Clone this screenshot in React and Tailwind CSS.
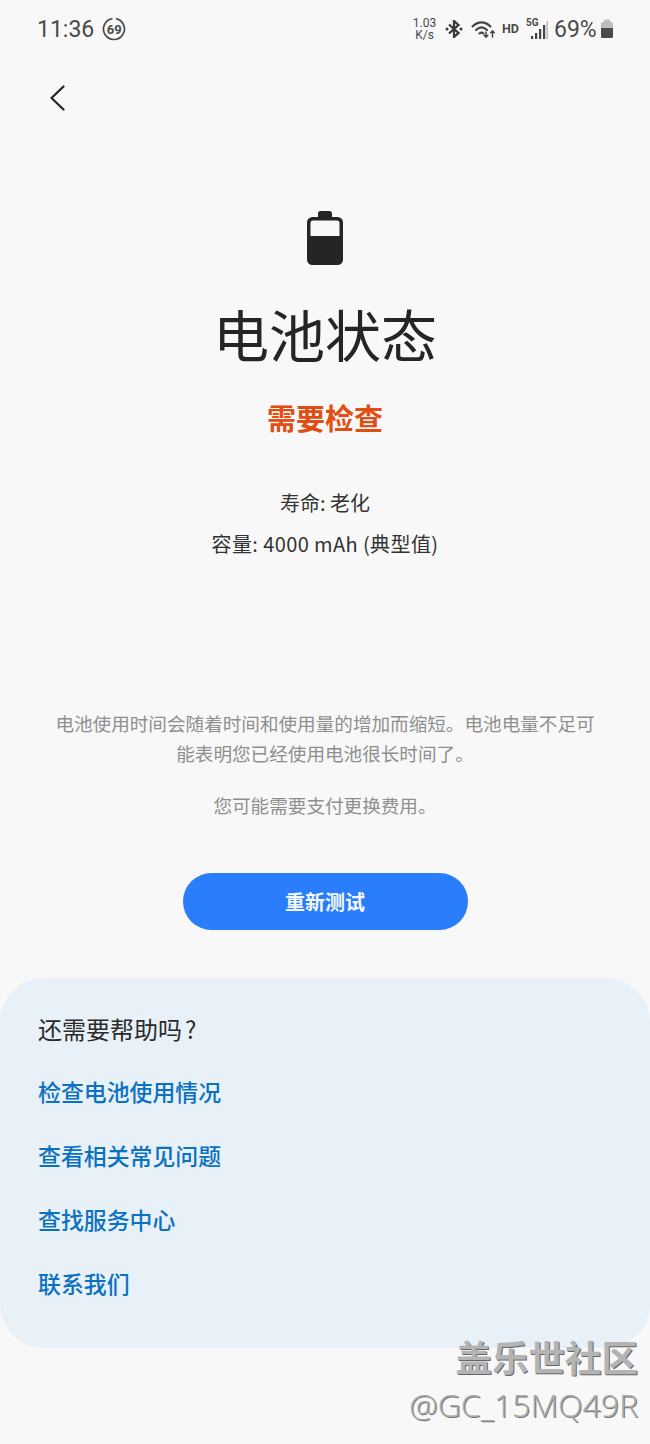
const cjk = { fontFamily: '"Noto Sans CJK SC", "Noto Sans", sans-serif' };

function StatusBar() {
  return (
    <div className="flex h-[58px] items-center justify-between pl-[37px] pr-[36px] text-[#4a4a4a]" style={{ fontFamily: 'Roboto, sans-serif' }}>
      <div className="flex items-center gap-[8px]">
        <span className="text-[23px] leading-none">11:36</span>
        <div className="relative flex h-[24px] w-[24px] items-center justify-center">
          <svg viewBox="0 0 24 24" className="absolute inset-0 h-[24px] w-[24px]" fill="none">
            <path d="M10.500 1.600A10.500 10.500 0 1 0 14 1.700" stroke="#4a4a4a" strokeWidth="1.700" />
          </svg>
          <span className="relative text-[13px] font-bold leading-none">69</span>
        </div>
      </div>
      <div className="flex items-center">
        <div className="flex w-[27px] flex-col items-center text-[12px] leading-[12px]">
          <span>1.03</span>
          <span>K/s</span>
        </div>
        <svg viewBox="0 0 18 18" className="ml-[7px] h-[18px] w-[18px]" fill="none" stroke="#3a3a3a" strokeWidth="2.300">
          <path d="M4 4.500l9.500 8.500L9 17V1l4.500 4L4 13.500" />
          <circle cx="2" cy="9" r="1.500" fill="#3a3a3a" stroke="none" />
          <circle cx="16" cy="9" r="1.500" fill="#3a3a3a" stroke="none" />
        </svg>
        <svg viewBox="0 0 26 20" className="ml-[8px] h-[20px] w-[26px]" fill="none" stroke="#444" strokeWidth="2.100" strokeLinecap="round">
          <path d="M1.500 7.500C7 2 14 2 19.500 7.500" />
          <path d="M5 11c3.500-3.300 7.500-3.300 11 0" />
          <path d="M8.500 14.500c1.500-1.300 2.500-1.300 4 0" />
          <path d="M15 13v5M13.200 16.300l1.800 1.900 1.800-1.900" strokeWidth="1.500" />
          <path d="M21.500 18v-6M19.800 13.800l1.700-1.900 1.700 1.900" strokeWidth="1.500" />
        </svg>
        <span className="ml-[5px] w-[17px] text-[12.500px] font-bold leading-none">HD</span>
        <div className="relative ml-[7px] h-[22px] w-[22px]">
          <span className="absolute left-0 top-0 text-[10px] font-bold leading-none">5G</span>
          <svg viewBox="0 0 22 22" className="absolute inset-0 h-[22px] w-[22px]" fill="#444">
            <rect x="5" y="18" width="2.200" height="3" />
            <rect x="9" y="15" width="2.200" height="6" />
            <rect x="13" y="11" width="2.200" height="10" />
            <rect x="17" y="7" width="2.200" height="14" />
            <rect x="20.400" y="3" width="1.600" height="18" fill="#bbb" />
          </svg>
        </div>
        <span className="ml-[6px] w-[45px] text-[23px] leading-none">69%</span>
        <svg viewBox="0 0 14 20" className="ml-[1px] h-[20px] w-[14px]">
          <rect x="4" y="0.500" width="6" height="3" rx="0.800" fill="#bdbdbd" />
          <path d="M1 4.500a1.500 1.500 0 0 1 1.500-1.500h9a1.500 1.500 0 0 1 1.500 1.500V9H1z" fill="#bdbdbd" />
          <path d="M1 9h12v8.500a1.500 1.500 0 0 1-1.500 1.500h-9A1.500 1.500 0 0 1 1 17.500z" fill="#4a4a4a" />
        </svg>
      </div>
    </div>
  );
}

function BigBattery() {
  return (
    <svg viewBox="0 0 36 54" className="h-[54px] w-[36px]">
      <path fillRule="evenodd" fill="#252525" d="M11 2.500A2.500 2.500 0 0 1 13.500 0h9A2.500 2.500 0 0 1 25 2.500V6h5.500A5.500 5.500 0 0 1 36 11.500v37a5.500 5.500 0 0 1-5.500 5.500h-25A5.500 5.500 0 0 1 0 48.500v-37A5.500 5.500 0 0 1 5.500 6H11zM6 9.500A2.500 2.500 0 0 0 3.500 12v13h29V12A2.500 2.500 0 0 0 30 9.500z" />
    </svg>
  );
}

export default function App() {
  const links = ['检查电池使用情况', '查看相关常见问题', '查找服务中心', '联系我们'];
  return (
    <div className="relative h-[1444px] w-[650px] overflow-hidden bg-[#f8f8f8]" style={cjk}>
      <StatusBar />
      <div className="ml-[47px] mt-[25px] h-[30px]">
        <svg viewBox="0 0 20 30" className="h-[30px] w-[20px]" fill="none" stroke="#262626" strokeWidth="2.300" strokeLinecap="round" strokeLinejoin="round">
          <path d="M16.500 3.500 4.500 15l12 11.500" />
        </svg>
      </div>
      <div className="mt-[98px] flex flex-col items-center">
        <BigBattery />
        <h1 className="mt-[20px] text-[56px] font-normal leading-[96px] text-[#252525]">电池状态</h1>
        <p className="mt-[15px] text-[29px] font-bold leading-[42px] text-[#e24d13]">需要检查</p>
        <p className="mt-[50px] text-[20px] leading-[30px] text-[#333333]">寿命: 老化</p>
        <p className="mt-[11px] text-[20px] leading-[30px] tracking-[0.4px] text-[#333333]">容量: 4000 mAh (典型值)</p>
        <p className="mt-[149px] w-[550px] text-center text-[18.600px] leading-[30px] text-[#8f8f8f]">
          电池使用时间会随着时间和使用量的增加而缩短。电池电量不足可能表明您已经使用电池很长时间了。
        </p>
        <p className="mt-[22px] text-[18.600px] leading-[30px] text-[#8f8f8f]">您可能需要支付更换费用。</p>
        <button className="mt-[53px] flex h-[57px] w-[285px] items-center justify-center rounded-full bg-[#2a7dfb] text-[20px] font-bold text-[#f4f8ff]">
          重新测试
        </button>
      </div>
      <div className="mt-[48px] h-[370px] rounded-[44px] bg-[#e8f0f8] px-[38px] pt-[33px]">
        <p className="text-[24px] leading-[36px] text-[#2b2b2b]">还需要帮助吗<span className="ml-[3px]">?</span></p>
        <div className="mt-[12px] flex flex-col">
          {links.map((l) => (
            <p key={l} className="h-[64px] text-[22.900px] font-medium leading-[64px] text-[#0b72c2]">{l}</p>
          ))}
        </div>
      </div>
      <div className="absolute bottom-[20px] right-[12px] flex flex-col items-end">
        <span className="text-[36.500px] font-bold leading-[44px] text-[#b4b4b4] [text-shadow:1px_1px_0_#666]">盖乐世社区</span>
        <span className="mt-[7px] text-[32px] font-light leading-[38px] text-[#aaaaaa] [text-shadow:1px_1px_0_#777]" style={{ fontFamily: '"Open Sans", sans-serif' }}>@GC_15MQ49R</span>
      </div>
    </div>
  );
}
